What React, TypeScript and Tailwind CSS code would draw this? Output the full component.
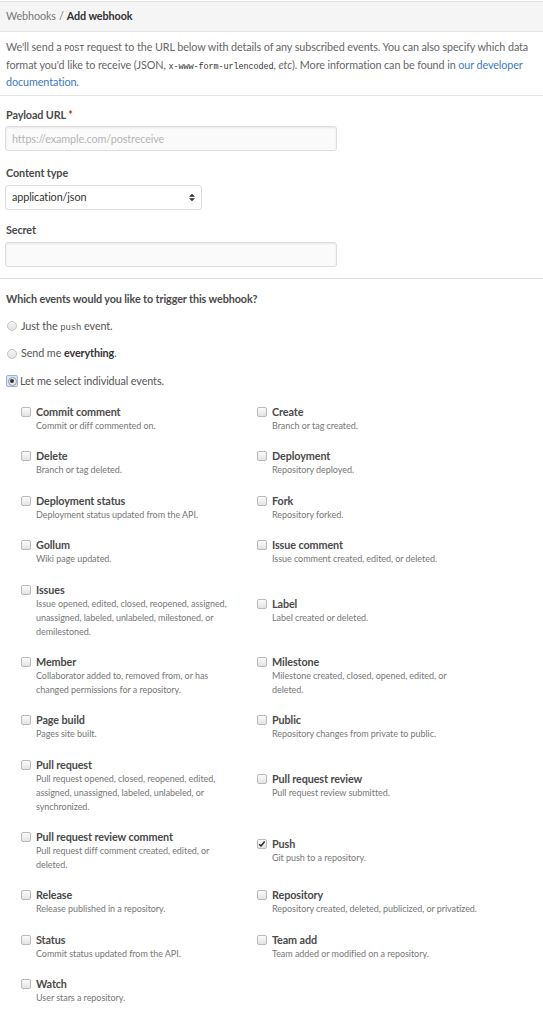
type Hook = { title: string; desc: string; checked?: boolean };

const rows: [Hook, Hook | null][] = [
  [
    { title: "Commit comment", desc: "Commit or diff commented on." },
    { title: "Create", desc: "Branch or tag created." },
  ],
  [
    { title: "Delete", desc: "Branch or tag deleted." },
    { title: "Deployment", desc: "Repository deployed." },
  ],
  [
    { title: "Deployment status", desc: "Deployment status updated from the API." },
    { title: "Fork", desc: "Repository forked." },
  ],
  [
    { title: "Gollum", desc: "Wiki page updated." },
    { title: "Issue comment", desc: "Issue comment created, edited, or deleted." },
  ],
  [
    {
      title: "Issues",
      desc: "Issue opened, edited, closed, reopened, assigned, unassigned, labeled, unlabeled, milestoned, or demilestoned.",
    },
    { title: "Label", desc: "Label created or deleted." },
  ],
  [
    {
      title: "Member",
      desc: "Collaborator added to, removed from, or has changed permissions for a repository.",
    },
    { title: "Milestone", desc: "Milestone created, closed, opened, edited, or deleted." },
  ],
  [
    { title: "Page build", desc: "Pages site built." },
    { title: "Public", desc: "Repository changes from private to public." },
  ],
  [
    {
      title: "Pull request",
      desc: "Pull request opened, closed, reopened, edited, assigned, unassigned, labeled, unlabeled, or synchronized.",
    },
    { title: "Pull request review", desc: "Pull request review submitted." },
  ],
  [
    {
      title: "Pull request review comment",
      desc: "Pull request diff comment created, edited, or deleted.",
    },
    { title: "Push", desc: "Git push to a repository.", checked: true },
  ],
  [
    { title: "Release", desc: "Release published in a repository." },
    { title: "Repository", desc: "Repository created, deleted, publicized, or privatized." },
  ],
  [
    { title: "Status", desc: "Commit status updated from the API." },
    { title: "Team add", desc: "Team added or modified on a repository." },
  ],
  [{ title: "Watch", desc: "User stars a repository." }, null],
];

const Checkbox = ({ checked }: { checked?: boolean }) => (
  <span className="relative mt-[3px] block h-[10px] w-[10px] shrink-0 rounded-[2px] border border-[#b9b9b9] bg-gradient-to-b from-[#fbfbfb] to-[#e3e3e3]">
    {checked && (
      <svg viewBox="0 0 10 10" className="absolute left-[0px] top-[0px] h-[8px] w-[8px]">
        <path d="M1.5 5.2 L3.8 7.5 L8.3 1.8" fill="none" stroke="#222" strokeWidth="1.8" />
      </svg>
    )}
  </span>
);

const Radio = ({ checked }: { checked?: boolean }) =>
  checked ? (
    <span className="flex h-[12px] w-[12px] shrink-0 items-center justify-center rounded-[2px] border border-[#8fb3e6] bg-[#dbe7f7]">
      <span className="flex h-[9px] w-[9px] items-center justify-center rounded-full border border-[#9a9a9a] bg-[#e8e8e8]">
        <span className="h-[4px] w-[4px] rounded-full bg-[#333]" />
      </span>
    </span>
  ) : (
    <span className="mx-[1px] h-[10px] w-[10px] shrink-0 rounded-full border border-[#c4c4c4] bg-gradient-to-b from-[#f7f7f7] to-[#e2e2e2]" />
  );

const Event = ({ hook }: { hook: Hook }) => (
  <div className="flex gap-[5px]">
    <Checkbox checked={hook.checked} />
    <div className="w-[205px]">
      <div className="text-[10.8px] font-bold leading-[15px] tracking-[-0.1px] text-[#4a4a4a]">{hook.title}</div>
      <div className="text-[9px] leading-[14px] tracking-[-0.05px] text-[#777]">{hook.desc}</div>
    </div>
  </div>
);

export default function App() {
  return (
    <div
      className="min-h-screen bg-white text-[10.8px] tracking-[-0.1px] text-[#666]"
      style={{ fontFamily: 'Lato, "Open Sans", sans-serif' }}
    >
      <div className="mt-[1px] flex h-[31px] items-center border-y border-[#e3e3e3] bg-[#f5f5f5] px-[6px]">
        <span className="text-[#777]">Webhooks</span>
        <span className="px-[3px] text-[#777]">/</span>
        <span className="font-bold text-[#333]">Add webhook</span>
      </div>

      <p className="px-[6px] pb-[4px] pt-[6px] leading-[17.6px]">
        We'll send a <code className="font-mono text-[8.5px] leading-none text-[#555]">POST</code> request to the URL below with details of
        any subscribed events. You can also specify which data format you'd like to receive (JSON,{" "}
        <code className="font-mono text-[8.5px] leading-none text-[#333]">x-www-form-urlencoded</code>, <em>etc</em>). More information can
        be found in <a className="text-[#4078c0]">our developer documentation</a>.
      </p>

      <div className="border-t border-[#e3e3e3] px-[5px] pb-[11px] pt-[10px]">
        <label className="block pl-[1px] font-bold leading-[17.6px] text-[#4a4a4a]">
          Payload URL <span className="text-[#bd2c00]">*</span>
        </label>
        <div className="mt-[3px] flex h-[25px] w-[332px] items-center rounded-[3px] border border-[#ddd] bg-[#fafafa] px-[6px] text-[#b5b5b5] shadow-[inset_0_1px_2px_rgba(0,0,0,0.075)]">
          https://example.com/postreceive
        </div>

        <label className="mt-[13px] block pl-[1px] font-bold leading-[17.6px] text-[#4a4a4a]">Content type</label>
        <div className="mt-[3px] flex h-[25px] w-[197px] items-center justify-between rounded-[3px] border border-[#ddd] bg-white pl-[6px] pr-[6px] text-[#333]">
          <span>application/json</span>
          <svg viewBox="0 0 8 10" className="h-[9px] w-[6px]">
            <path d="M0 4 L4 0 L8 4 Z M0 6 L8 6 L4 10 Z" fill="#333" />
          </svg>
        </div>

        <label className="mt-[11px] block pl-[1px] font-bold leading-[17.6px] text-[#4a4a4a]">Secret</label>
        <div className="mt-[3px] h-[25px] w-[332px] rounded-[3px] border border-[#ddd] bg-[#fafafa] shadow-[inset_0_1px_2px_rgba(0,0,0,0.075)]" />
      </div>

      <div className="border-t border-[#e3e3e3] px-[6px] pt-[11px]">
        <div className="font-bold leading-[17.6px] text-[#4a4a4a]">Which events would you like to trigger this webhook?</div>

        <div className="mt-[10px] flex flex-col gap-[10px]">
          <div className="flex h-[17.6px] items-center gap-[3px]">
            <Radio />
            <span className="text-[#555]">
              Just the <code className="text-[9px] leading-none text-[#555]">push</code> event.
            </span>
          </div>
          <div className="flex h-[17.6px] items-center gap-[3px]">
            <Radio />
            <span className="text-[#555]">
              Send me <strong className="font-bold text-[#333]">everything</strong>.
            </span>
          </div>
          <div className="flex h-[17.6px] items-center gap-[2px]">
            <Radio checked />
            <span className="text-[#555]">Let me select individual events.</span>
          </div>
        </div>

        <div className="mt-[14px] grid grid-cols-[236px_236px] items-center gap-y-[15.4px] pb-[14px] pl-[15px]">
          {rows.map(([l, r], i) => (
            <div key={i} className="contents">
              <Event hook={l} />
              {r ? <Event hook={r} /> : <div />}
            </div>
          ))}
        </div>
      </div>
    </div>
  );
}
